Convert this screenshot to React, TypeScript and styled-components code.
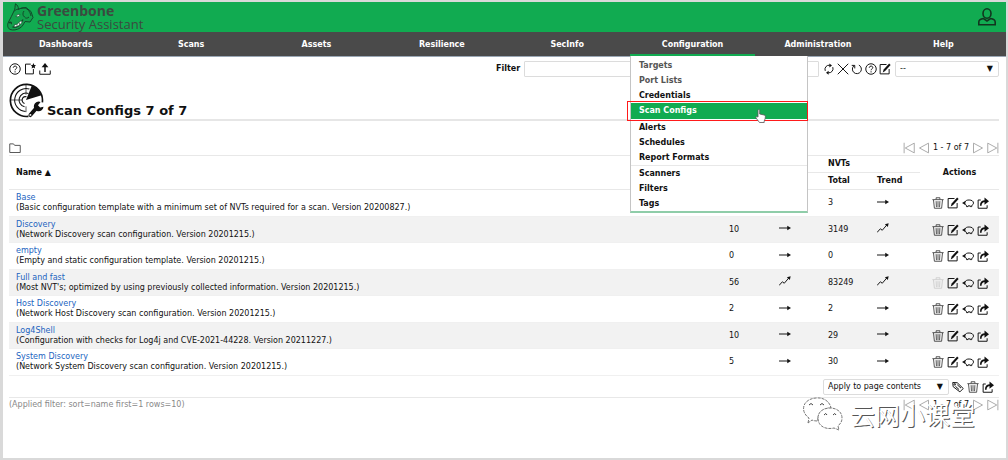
import React from "react";
import styled, { createGlobalStyle, css } from "styled-components";

const green = "#11ab51";
const line = "#e8e8e8";

const GlobalStyle = createGlobalStyle`
  * { box-sizing: border-box; }
  body {
    margin: 0;
    background: #d9d9d9;
    color: #111;
    font: 8px/10px "DejaVu Sans", Verdana, sans-serif;
  }
  button, input, select { font: inherit; color: inherit; }
`;

const Page = styled.div`
  min-height: 100vh;
  padding: 2px 2px 2px 3px;
  display: flex;
`;

const Frame = styled.div`
  flex: 1;
  min-width: 0;
  background: #fff;
  position: relative;
`;

const Header = styled.header`
  height: 30px;
  padding: 0 9px 0 4px;
  background: ${green};
  display: flex;
  align-items: center;
  justify-content: space-between;
`;

const Brand = styled.a`
  display: flex;
  align-items: center;
  gap: 2px;
  color: #3b4a40;
  text-decoration: none;
`;

const BrandText = styled.span`
  display: flex;
  flex-direction: column;
  font: 13px/13px "Open Sans", sans-serif;
`;

const BrandName = styled.strong`
  font-size: 14px;
  line-height: 14px;
`;

const Nav = styled.nav`
  background: #4a4a4a;
  border-bottom: 1px solid #9aa7b5;
`;

const NavList = styled.ul`
  margin: 0;
  padding: 0;
  list-style: none;
  display: grid;
  grid-template-columns: repeat(8, 1fr);
`;

const NavItem = styled.li<{ $active?: boolean }>`
  position: relative;
  height: 24px;
  border-bottom: 2px solid ${(p) => (p.$active ? green : "transparent")};
`;

const NavLink = styled.a`
  display: block;
  line-height: 25px;
  text-align: center;
  color: #fff;
  font-weight: bold;
  text-decoration: none;
`;

const Menu = styled.ul`
  position: absolute;
  z-index: 2;
  top: 24px;
  left: 0;
  width: 178px;
  margin: 0;
  padding: 2px 0 0;
  list-style: none;
  background: #fff;
  border: solid #c4c4c4;
  border-width: 0 1px;
  border-bottom: 2px solid #8fcda9;
`;

const MenuItem = styled.li<{ $current?: boolean; $divided?: boolean }>`
  position: relative;
  ${(p) => p.$divided && css`border-top: 1px solid ${line};`}
  ${(p) =>
    p.$current &&
    css`
      margin-bottom: 1px;
      background: ${green};
      &::after {
        content: "";
        position: absolute;
        inset: -2px -1px -2px -4px;
        border: 1px solid #ff1a1a;
      }
    `}
`;

const MenuLink = styled.a<{ $current?: boolean; $muted?: boolean }>`
  display: block;
  padding-left: 8px;
  line-height: ${(p) => (p.$current ? "16px" : "15px")};
  font-weight: bold;
  text-decoration: none;
  color: ${(p) => (p.$current ? "#fff" : p.$muted ? "#555" : "#111")};
`;

const Pointer = styled.svg`
  position: absolute;
  z-index: 1;
  left: 124px;
  top: 6px;
`;

const Main = styled.main`
  padding: 4px 7px 0 6px;
`;

const Toolbar = styled.div`
  display: flex;
  justify-content: space-between;
  align-items: center;
  height: 16px;
`;

const IconRow = styled.div<{ $gap?: number }>`
  display: flex;
  align-items: center;
  gap: ${(p) => p.$gap ?? 3}px;
`;

const IconButton = styled.button`
  display: flex;
  flex: none;
  padding: 0;
  border: 0;
  background: none;
  &:disabled { opacity: 0.2; }
`;

const FilterForm = styled.form`
  display: flex;
  align-items: center;
  gap: 4px;
  flex: 0 1 503px;
`;

const FilterLabel = styled.label`
  font-weight: bold;
`;

const FilterInput = styled.input`
  flex: 1;
  min-width: 0;
  height: 16px;
  border: 1px solid #dcdcdc;
  border-radius: 1px;
`;

const SelectBox = styled.span<{ $width: number }>`
  position: relative;
  display: block;
  width: ${(p) => p.$width}px;
  &::after {
    content: "▼";
    position: absolute;
    right: 6px;
    top: 3px;
    pointer-events: none;
  }
`;

const Select = styled.select`
  appearance: none;
  display: block;
  width: 100%;
  height: 16px;
  padding: 0 4px;
  background: #fff;
  border: 1px solid #dcdcdc;
  border-radius: 2px;
`;

const TitleBar = styled.div`
  display: flex;
  align-items: flex-end;
  gap: 3px;
  margin-top: 6px;
  padding-bottom: 1px;
  border-bottom: 2px solid #e6e6e6;
`;

const Title = styled.h1`
  margin: 0;
  font-size: 13px;
  line-height: 14px;
`;

const ListBar = styled.div`
  display: flex;
  justify-content: space-between;
  align-items: center;
  margin-top: 20px;
  height: 14px;
`;

const Pager = styled.nav`
  display: flex;
  align-items: center;
  gap: 3px;
`;

const Table = styled.table`
  width: 100%;
  table-layout: fixed;
  border-collapse: collapse;
  border-top: 1px solid ${line};
`;

const Col = styled.col<{ $width?: number }>`
  width: ${(p) => (p.$width ? `${p.$width}px` : "auto")};
`;

const Th = styled.th<{ $center?: boolean }>`
  height: 17px;
  padding: 0 8px 0 ${(p) => (p.$center ? 8 : 7)}px;
  border-bottom: 1px solid ${line};
  text-align: ${(p) => (p.$center ? "center" : "left")};
`;

const Row = styled.tr`
  height: 27px;
  border-bottom: 1px solid #f0f0f0;
  &:nth-child(even) {
    height: 26px;
    background: #f2f2f2;
  }
`;

const Td = styled.td<{ $actions?: boolean }>`
  padding: 0 0 0 ${(p) => (p.$actions ? 12 : 7)}px;
`;

const NameLink = styled.a`
  display: block;
  color: #2264bf;
  text-decoration: none;
`;

const BulkBar = styled.div`
  display: flex;
  justify-content: flex-end;
  align-items: center;
  gap: 3px;
  height: 22px;
  padding-right: 5px;
  border-bottom: 1px solid ${line};
`;

const Footer = styled.footer`
  display: flex;
  justify-content: space-between;
  align-items: center;
  height: 14px;
  color: #888;
`;

const PagerText = styled.span`
  color: #111;
`;

const Watermark = styled.div`
  position: absolute;
  right: 31px;
  bottom: 27px;
  display: flex;
  align-items: center;
  gap: 7px;
  color: #fff;
  font: 25px/32px "Noto Sans CJK SC", sans-serif;
  text-shadow: 1px 1px 0 #555;
`;

const drawings = {
  help: (
    <>
      <circle cx="8" cy="8" r="7" />
      <path d="M5.7 6.3c0-3 4.7-2.8 4.7-.2 0 1.8-2.3 1.6-2.3 3.6M8.1 11v1.6" />
    </>
  ),
  create: (
    <>
      <path d="M9 1.5H2v13h10.500V8" />
      <path d="M12.500 0l1.200 2.700 2.300.3-1.700 1.700.5 2.500-2.300-1.300-2.300 1.300.5-2.500L9 3l2.500-.3z" fill="#111" stroke="none" />
    </>
  ),
  upload: (
    <>
      <path d="M1 10v5h14v-5" />
      <path d="M8 12V3" strokeWidth="2" />
      <path d="M3.500 5.500L8 0l4.500 5.500z" fill="#111" stroke="none" />
    </>
  ),
  refresh: (
    <>
      <path d="M3 10.500A5.500 5.500 0 0 1 9 3M13 5.500A5.500 5.500 0 0 1 7 13" />
      <path d="M8.500.5l3.500 2.700-3.500 2.700zM7.500 10.200L4 12.900l3.500 2.700z" fill="#111" stroke="none" />
    </>
  ),
  clear: <path d="M1 1l14 14M15 1L1 15" />,
  reset: (
    <>
      <path d="M10.500 2.800a6 6 0 1 1-6.500.8" />
      <path d="M1 3.200h4v4" />
    </>
  ),
  edit: (
    <>
      <path d="M10 2H1.500v12.500h12V8" />
      <path d="M5 12.500l1.200-4L13.500.7l2 1.800L8.200 10.500z" fill="#111" stroke="none" />
    </>
  ),
  trash: (
    <path
      d="M.5 3.500h15M5.500 3V1h5v2M2 4l1.200 11h9.600L14 4M5.500 5.500l.4 8M8 5.500v8M10.500 5.500l-.4 8"
      stroke="#333"
      strokeWidth="1.100"
    />
  ),
  clone: (
    <>
      <path d="M4 7C4.500 4.500 7 4 9.500 4c3.500 0 5.800 1.600 5.800 4 0 1.700-1 2.600-2.300 3.200v1.600h-2v-1H8v1H6v-1.600C4.600 10.600 4 9.800 3.800 9" />
      <path d="M0 8l4.500-2.700v5.200z" fill="#111" stroke="none" />
    </>
  ),
  share: (
    <>
      <path d="M5 4H1.500v11h12v-4" />
      <path d="M5 11.500C5 7.500 7 5.500 11 5.500" strokeWidth="2.200" />
      <path d="M10 .8l6 4.700-6 4.700z" fill="#111" stroke="none" />
    </>
  ),
  tag: (
    <>
      <path d="M1 2l6 .3L15 10l-4.500 4.500L1.500 7.500zM4.500 7l5 4.500M7 5l5 4.500" />
      <circle cx="3.700" cy="4.500" r="1" />
    </>
  ),
  flat: (
    <>
      <path d="M0 8h12" />
      <path d="M11 5l5 3-5 3z" fill="#111" stroke="none" />
    </>
  ),
  up: (
    <>
      <path d="M0 14l4.500-5 2.500 2 6-7" />
      <path d="M15.500 1.500l-1 5-4-3.500z" fill="#111" stroke="none" />
    </>
  ),
  folder: <path d="M1 14V2.500h5l1.500 2H15V14z" stroke="#555" />,
  first: <path d="M1.500 1v14M15 1.500v13L3 8z" stroke="#aaa" />,
  prev: <path d="M14 1.500v13L2 8z" stroke="#aaa" />,
  next: <path d="M2 1.500v13L14 8z" stroke="#aaa" />,
  last: <path d="M14.500 1v14M1 1.500v13L13 8z" stroke="#aaa" />,
};

type IconName = keyof typeof drawings;

const Icon = ({ name, size = 12 }: { name: IconName; size?: number }) => (
  <svg width={size} height={size} viewBox="0 0 16 16" fill="none" stroke="#111" strokeWidth="1.300" aria-hidden="true">
    {drawings[name]}
  </svg>
);

const Action = ({ name, label, disabled, size }: { name: IconName; label: string; disabled?: boolean; size?: number }) => (
  <IconButton type="button" aria-label={label} disabled={disabled}>
    <Icon name={name} size={size} />
  </IconButton>
);

const DragonLogo = () => (
  <svg width="28" height="28" viewBox="0 0 28 28" fill="none" stroke="#12482a" aria-hidden="true">
    <path d="M8.500.8c-.8 3 0 4.500-1.500 7.200C5.500 12 3 15.500 1.500 19 0 22 .5 25 3 26.500c3 1 7 .5 10-1.500 2.500-1.500 3.500-4 5-6.500l5 .5 3-4.500-2-6-5-4-6 1c-1 .5-1.500 1-1.500 1C11.500 4 10.500 2 8.500.8z" fill="#12a04c" />
    <path d="M13.500 5.500c2-1 4.500-1 6.500.5 2.500 2 3.500 4.500 4 7M17 8c-1.500 2-1.500 4.500.5 6 1 1.500 3 1.500 4.500 0M7.500 8c1.500-1.500 3-2 5-2" />
    <path d="M2 20c1.500-1.500 3-.5 2 1M5.500 24c3 .5 6-.5 8-3.500l2.500-4" strokeWidth="1.400" />
    <path d="M7.500 21.500c2.500.5 4-1.500 6-3.500l2 .5c-1.500 3-4.500 5.500-8.500 5.500z" fill="#fff" strokeWidth=".7" />
    <path d="M10 21v2.500M12.500 19.500v2.500" strokeWidth=".6" />
    <path d="M9 13.500c1-1.800 2.500-2.500 4-2-.3 1.800-2 2.800-4 2z" fill="#e8f7ee" strokeWidth=".7" />
  </svg>
);

const UserIcon = () => (
  <svg width="20" height="20" viewBox="0 0 20 20" fill="none" stroke="#12351f" strokeWidth="1.600" aria-hidden="true">
    <ellipse cx="10" cy="6.500" rx="4" ry="4.700" />
    <path d="M6.500 11.500C3.500 12 1.800 13 1.800 15v2.700h16.400V15c0-2-1.700-3-4.700-3.500L10 14z" />
  </svg>
);

const RadarIcon = () => (
  <svg width="35" height="35" viewBox="0 0 36 36" fill="none" stroke="#111" aria-hidden="true">
    <path d="M20 34.300A16.500 16.500 0 1 1 34.300 20" strokeWidth="1.700" />
    <path d="M17 29.300A11.800 11.800 0 1 1 21 6.200M16 24.500a7.200 7.200 0 1 1 4-13.800M16 21a3.500 3.500 0 1 1 2-6.800" strokeWidth="1.100" />
    <path d="M2 17.500h12M17.500 2v10M17.500 24v6" strokeWidth=".7" />
    <path d="M17.500 17.500L23.500 2.500c5 2 8.500 5.500 10 10z" fill="#111" stroke="none" />
    <path d="M22 33l6-7" strokeWidth="4" strokeLinecap="round" />
    <path d="M32.500 19.500a5 5 0 1 0 3 5l-3.500.8-2.200-2.500z" fill="#111" stroke="none" />
    <circle cx="22" cy="32.800" r="1" fill="#fff" stroke="none" />
  </svg>
);

const WeChatIcon = () => (
  <svg width="41" height="34" viewBox="0 0 41 34" fill="#fff" stroke="#777" strokeWidth="1" strokeDasharray="3 1" aria-hidden="true">
    <path d="M6 26l1-5C-2 15 0 2 14 1c8-1 14 4 15 10-8 0-14 5-13 13-2 0-4 0-6-1z" />
    <path d="M16 21c0-6 5-10 12-10s12 4 12 10c0 4-2 6-4 8l1 4-5-2c-9 2-16-2-16-10z" />
    <path d="M7 8q2-3 4 0M18 8q2-3 4 0M22 18q2-3 3 0M31 18q2-3 3 0" strokeDasharray="none" stroke="#444" />
  </svg>
);

const menu = ["Targets", "Port Lists", "Credentials", "Scan Configs", "Alerts", "Schedules", "Report Formats", "Scanners", "Filters", "Tags"];
const sections = ["Dashboards", "Scans", "Assets", "Resilience", "SecInfo", "Configuration", "Administration", "Help"];

type Trend = "flat" | "up";
type Config = { name: string; comment: string; families: number; familyTrend: Trend; nvts: number; nvtTrend: Trend; locked?: boolean };

const configs: Config[] = [
  { name: "Base", comment: "Basic configuration template with a minimum set of NVTs required for a scan. Version 20200827.", families: 2, familyTrend: "flat", nvts: 3, nvtTrend: "flat" },
  { name: "Discovery", comment: "Network Discovery scan configuration. Version 20201215.", families: 10, familyTrend: "flat", nvts: 3149, nvtTrend: "up" },
  { name: "empty", comment: "Empty and static configuration template. Version 20201215.", families: 0, familyTrend: "flat", nvts: 0, nvtTrend: "flat" },
  { name: "Full and fast", comment: "Most NVT's; optimized by using previously collected information. Version 20201215.", families: 56, familyTrend: "up", nvts: 83249, nvtTrend: "up", locked: true },
  { name: "Host Discovery", comment: "Network Host Discovery scan configuration. Version 20201215.", families: 2, familyTrend: "flat", nvts: 2, nvtTrend: "flat" },
  { name: "Log4Shell", comment: "Configuration with checks for Log4j and CVE-2021-44228. Version 20211227.", families: 10, familyTrend: "flat", nvts: 29, nvtTrend: "flat" },
  { name: "System Discovery", comment: "Network System Discovery scan configuration. Version 20201215.", families: 5, familyTrend: "flat", nvts: 30, nvtTrend: "flat" },
];

const Pagination = () => (
  <Pager aria-label="Pages">
    <Action name="first" label="First page" />
    <Action name="prev" label="Previous page" />
    <PagerText>1 - 7 of 7</PagerText>
    <Action name="next" label="Next page" />
    <Action name="last" label="Last page" />
  </Pager>
);

const ConfigurationMenu = () => (
  <Menu>
    {menu.map((item) => {
      const current = item === "Scan Configs";
      return (
        <MenuItem key={item} $current={current} $divided={item === "Scanners"}>
          <MenuLink href="#" $current={current} $muted={item === "Targets" || item === "Port Lists"}>
            {item}
          </MenuLink>
          {current && (
            <Pointer width="11" height="14" viewBox="0 0 11 14" fill="#fff" stroke="#555" strokeWidth=".8" aria-hidden="true">
              <path d="M3 8V1.500c0-1.300 1.700-1.300 1.700 0V5l4.500 1c.8.200 1.200.7 1.200 1.500 0 2-.4 3-1.200 4.500v1.500H4.500L1 9c-.5-1.300.7-1.800 2-1z" />
            </Pointer>
          )}
        </MenuItem>
      );
    })}
  </Menu>
);

export default function App() {
  return (
    <Page>
      <GlobalStyle />
      <Frame>
        <Header>
          <Brand href="#">
            <DragonLogo />
            <BrandText>
              <BrandName>Greenbone</BrandName>
              Security Assistant
            </BrandText>
          </Brand>
          <IconButton type="button" aria-label="User">
            <UserIcon />
          </IconButton>
        </Header>
        <Nav>
          <NavList>
            {sections.map((s) => (
              <NavItem key={s} $active={s === "Configuration"}>
                <NavLink href="#">{s}</NavLink>
                {s === "Configuration" && <ConfigurationMenu />}
              </NavItem>
            ))}
          </NavList>
        </Nav>
        <Main>
          <Toolbar>
            <IconRow>
              <Action name="help" label="Help" />
              <Action name="create" label="New scan config" />
              <Action name="upload" label="Import scan config" />
            </IconRow>
            <FilterForm>
              <FilterLabel htmlFor="filter">Filter</FilterLabel>
              <FilterInput id="filter" />
              <IconRow $gap={2}>
                <Action name="refresh" label="Update filter" />
                <Action name="clear" label="Remove filter" />
                <Action name="reset" label="Reset filter" />
                <Action name="help" label="Filter help" />
                <Action name="edit" label="Edit filter" />
              </IconRow>
              <SelectBox $width={104}>
                <Select aria-label="Saved filter">
                  <option>--</option>
                </Select>
              </SelectBox>
            </FilterForm>
          </Toolbar>
          <TitleBar>
            <RadarIcon />
            <Title>Scan Configs 7 of 7</Title>
          </TitleBar>
          <ListBar>
            <Action name="folder" label="Folder" />
            <Pagination />
          </ListBar>
          <Table>
            <colgroup>
              <Col />
              <Col $width={50} />
              <Col $width={49} />
              <Col $width={49} />
              <Col $width={50} />
              <Col $width={79} />
            </colgroup>
            <thead>
              <tr>
                <Th rowSpan={2}>Name ▲</Th>
                <Th colSpan={2}>Families</Th>
                <Th colSpan={2}>NVTs</Th>
                <Th rowSpan={2} $center>Actions</Th>
              </tr>
              <tr>
                <Th>Total</Th>
                <Th>Trend</Th>
                <Th>Total</Th>
                <Th>Trend</Th>
              </tr>
            </thead>
            <tbody>
              {configs.map((c) => (
                <Row key={c.name}>
                  <Td>
                    <NameLink href="#">{c.name}</NameLink>({c.comment})
                  </Td>
                  <Td>{c.families}</Td>
                  <Td><Icon name={c.familyTrend} /></Td>
                  <Td>{c.nvts}</Td>
                  <Td><Icon name={c.nvtTrend} /></Td>
                  <Td $actions>
                    <IconRow>
                      <Action name="trash" label={`Delete ${c.name}`} disabled={c.locked} />
                      <Action name="edit" label={`Edit ${c.name}`} />
                      <Action name="clone" label={`Clone ${c.name}`} />
                      <Action name="share" label={`Export ${c.name}`} />
                    </IconRow>
                  </Td>
                </Row>
              ))}
            </tbody>
          </Table>
          <BulkBar>
            <SelectBox $width={126}>
              <Select aria-label="Bulk selection">
                <option>Apply to page contents</option>
              </Select>
            </SelectBox>
            <Action name="tag" label="Tag page contents" />
            <Action name="trash" label="Delete page contents" />
            <Action name="share" label="Export page contents" />
          </BulkBar>
          <Footer>
            <span>(Applied filter: sort=name first=1 rows=10)</span>
            <Pagination />
          </Footer>
        </Main>
        <Watermark>
          <WeChatIcon />
          <span>云网小课堂</span>
        </Watermark>
      </Frame>
    </Page>
  );
}
